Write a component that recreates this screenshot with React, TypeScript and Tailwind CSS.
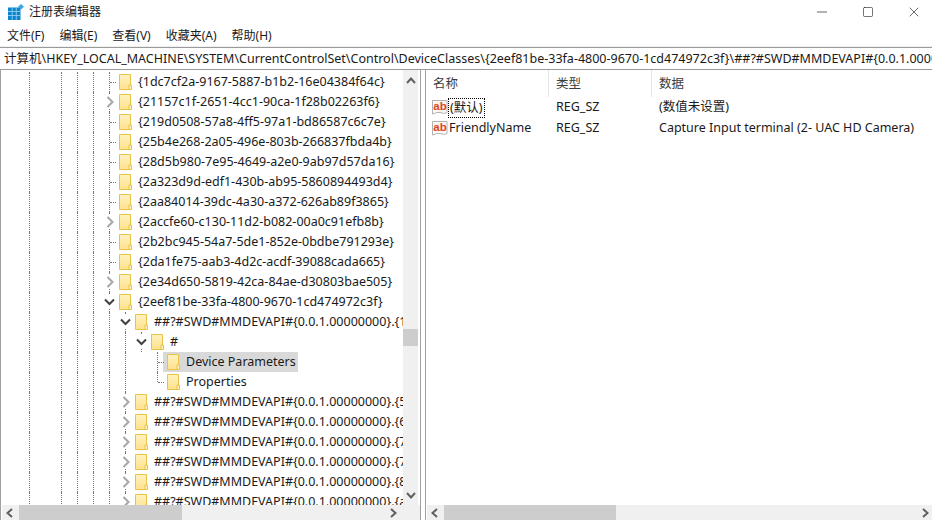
import React from "react";
import { Minus, Square, X } from "lucide-react";

const SANS = "font-['Noto_Sans','Noto_Sans_CJK_SC',sans-serif]";
const MM = "##?#SWD#MMDEVAPI#{0.0.1.00000000}.";

const FolderIcon = () => (
  <svg width="13" height="16" viewBox="0 0 13 16" className="block shrink-0">
    <defs>
      <linearGradient id="folderFill" x1="0" y1="0" x2="0" y2="1">
        <stop offset="0" stopColor="#fff2c0" />
        <stop offset="1" stopColor="#fde28a" />
      </linearGradient>
    </defs>
    <path d="M.5.5h11v15H.5z" fill="url(#folderFill)" stroke="#e8c34a" />
    <path d="M10 15.5V11h2.5v4.5z" fill="#fff2c0" stroke="#e8c34a" />
  </svg>
);

const RegIcon = () => (
  <svg width="16" height="18" viewBox="0 0 16 18" className="block shrink-0">
    <path d="M.5 1.5h14.5v12c-3 1.5-4 .5-7 0s-4 .5-7.5 1.5z" fill="#fff" stroke="#b0b0b0" />
    <rect x="2" y="2.5" width="12" height="10" fill="#fdf1ed" />
    <text x="8" y="11" textAnchor="middle" fontSize="11.5" fontWeight="700" fill="#d8481f" fontFamily="Liberation Sans, sans-serif">
      ab
    </text>
  </svg>
);

// scrollbar and tree arrows are drawn, lucide's chevrons come out too thin at this size
const Arrow = ({ dir, color = "#606060" }: { dir: "left" | "right" | "up" | "down"; color?: string }) => {
  const d = {
    left: "M6 1 1.5 5 6 9",
    right: "M2 1l4.5 4L2 9",
    up: "M1 6l4-4.5L9 6",
    down: "M1 2l4 4.5L9 2",
  }[dir];
  return (
    <svg width="10" height="10" viewBox="0 0 10 10" className="block shrink-0" style={{ overflow: "visible" }}>
      <path d={d} fill="none" stroke={color} strokeWidth="2" />
    </svg>
  );
};

// one indent column of the tree, the dotted guide runs down its left edge
const Guide = ({ w = 16, on = true }: { w?: number; on?: boolean }) => (
  <div className={`shrink-0 h-5 border-l border-dotted ${on ? "border-[#777]" : "border-transparent"}`} style={{ width: w }} />
);

type Exp = "none" | "closed" | "open" | "elbow" | "elbowEnd";

const Expander = ({ kind }: { kind: Exp }) => (
  <div className="relative w-[10px] h-5 shrink-0">
    {kind === "elbowEnd" ? (
      <div className="absolute left-0 top-0 h-[10px] border-l border-dotted border-[#777]" />
    ) : (
      <div className="absolute left-0 top-0 h-5 border-l border-dotted border-[#777]" />
    )}
    {(kind === "none" || kind === "elbow" || kind === "elbowEnd") && (
      <div className="absolute left-px top-[10px] w-[6px] border-t border-dotted border-[#777]" />
    )}
    {kind === "closed" && (
      <div className="absolute left-[-5px] top-[3px] w-[11px] h-[14px] bg-white flex items-center justify-center">
        <svg width="8" height="12" viewBox="0 0 8 12">
          <path d="M1.5 1l5 5-5 5" fill="none" stroke="#a6a6a6" strokeWidth="2" />
        </svg>
      </div>
    )}
    {kind === "open" && (
      <div className="absolute left-[-6px] top-[3px] w-[12px] h-[14px] bg-white flex items-center justify-center">
        <svg width="11" height="8" viewBox="0 0 11 8">
          <path d="M1 1.5l4.5 4.5L10 1.5" fill="none" stroke="#404040" strokeWidth="2" />
        </svg>
      </div>
    )}
  </div>
);

type Row = { depth: number; exp: Exp; text: string; selected?: boolean };

const rows: Row[] = [
  { depth: 0, exp: "none", text: "{1dc7cf2a-9167-5887-b1b2-16e04384f64c}" },
  { depth: 0, exp: "closed", text: "{21157c1f-2651-4cc1-90ca-1f28b02263f6}" },
  { depth: 0, exp: "none", text: "{219d0508-57a8-4ff5-97a1-bd86587c6c7e}" },
  { depth: 0, exp: "none", text: "{25b4e268-2a05-496e-803b-266837fbda4b}" },
  { depth: 0, exp: "none", text: "{28d5b980-7e95-4649-a2e0-9ab97d57da16}" },
  { depth: 0, exp: "none", text: "{2a323d9d-edf1-430b-ab95-5860894493d4}" },
  { depth: 0, exp: "none", text: "{2aa84014-39dc-4a30-a372-626ab89f3865}" },
  { depth: 0, exp: "closed", text: "{2accfe60-c130-11d2-b082-00a0c91efb8b}" },
  { depth: 0, exp: "none", text: "{2b2bc945-54a7-5de1-852e-0bdbe791293e}" },
  { depth: 0, exp: "none", text: "{2da1fe75-aab3-4d2c-acdf-39088cada665}" },
  { depth: 0, exp: "closed", text: "{2e34d650-5819-42ca-84ae-d30803bae505}" },
  { depth: 0, exp: "open", text: "{2eef81be-33fa-4800-9670-1cd474972c3f}" },
  { depth: 1, exp: "open", text: MM + "{1" },
  { depth: 2, exp: "open", text: "#" },
  { depth: 3, exp: "elbow", text: "Device Parameters", selected: true },
  { depth: 3, exp: "elbowEnd", text: "Properties" },
  { depth: 1, exp: "closed", text: MM + "{5" },
  { depth: 1, exp: "closed", text: MM + "{6" },
  { depth: 1, exp: "closed", text: MM + "{7" },
  { depth: 1, exp: "closed", text: MM + "{7" },
  { depth: 1, exp: "closed", text: MM + "{8" },
  { depth: 1, exp: "closed", text: MM + "{a" },
];

const TreeRow = ({ row }: { row: Row }) => (
  <div className="flex items-center h-5 pl-[29px] whitespace-nowrap">
    <Guide w={32} />
    <Guide />
    <Guide />
    <Guide />
    {row.depth >= 1 && <Guide />}
    {row.depth >= 2 && <Guide />}
    {row.depth >= 3 && <Guide on={false} />}
    <Expander kind={row.exp} />
    <div className={`flex items-center h-5 ${row.selected ? "bg-[#d9d9d9] pr-[2px] ml-[-4px] pl-[4px]" : ""}`}>
      <FolderIcon />
      <span className="ml-[6px] pt-px text-[12.5px] text-[#1a1a1a]">{row.text}</span>
    </div>
  </div>
);

const columns = [
  { title: "名称", w: "w-[123px]" },
  { title: "类型", w: "w-[103px]" },
  { title: "数据", w: "flex-1" },
];

const menus = ["文件(F)", "编辑(E)", "查看(V)", "收藏夹(A)", "帮助(H)"];

export default function App() {
  return (
    <div className={`${SANS} w-[932px] h-[520px] bg-white flex flex-col overflow-hidden text-[12.5px] text-[#1a1a1a]`}>
      {/* title bar */}
      <div className="h-[26px] flex items-center shrink-0 pb-[3px]">
        <svg width="16" height="16" viewBox="0 0 16 16" className="ml-2">
          <rect x="0" y="3.5" width="12.5" height="12.5" fill="#0a86cf" />
          <path d="M0 7.5h12.5M0 11.5h12.5M4.2 3.5V16M8.3 3.5V16" stroke="#9fd4f2" strokeWidth=".8" />
          <path d="M13 0l3 2.7L13 5.4l-3-2.7z" fill="#3aa6e4" />
        </svg>
        <span className="ml-[5px] text-[12px]">注册表编辑器</span>
        <div className="ml-auto -mr-[5px] flex items-center">
          <div className="w-[46px] flex justify-center"><Minus size={16} strokeWidth={1} /></div>
          <div className="w-[46px] flex justify-center"><Square size={12} strokeWidth={1.2} /></div>
          <div className="w-[46px] flex justify-center"><X size={16} strokeWidth={1} /></div>
        </div>
      </div>

      {/* menu */}
      <div className="h-[21px] flex items-center pl-[7px] gap-[15px] shrink-0 border-b border-[#f0f0f0]">
        {menus.map((m) => (
          <span key={m} className="text-[12px]">{m}</span>
        ))}
      </div>

      {/* address bar */}
      <div className="h-[23px] shrink-0 bg-white border-y border-[#9a9a9a] flex items-center pl-[4px] pt-px overflow-hidden whitespace-nowrap">
        计算机\HKEY_LOCAL_MACHINE\SYSTEM\CurrentControlSet\Control\DeviceClasses\{"{2eef81be-33fa-4800-9670-1cd474972c3f}"}\##?#SWD#MMDEVAPI#{"{0.0.1.00000000}.{1"}
      </div>

      {/* panes */}
      <div className="flex-1 flex min-h-0">
        <div className="w-[420px] shrink-0 flex flex-col border-l border-[#a0a0a0]">
          <div className="flex-1 flex min-h-0">
            <div className="flex-1 min-w-0 overflow-hidden pt-[2px] ml-[-1px]">
              {rows.map((r, i) => (
                <TreeRow key={i} row={r} />
              ))}
            </div>
            <div className="w-[15px] shrink-0 bg-[#f0f0f0] flex flex-col items-center">
              <div className="mt-[7px]"><Arrow dir="up" /></div>
              <div className="w-full h-[17px] bg-[#cdcdcd] mt-[242px]" />
              <div className="flex-1" />
              <div className="mb-[4px]"><Arrow dir="down" /></div>
            </div>
            <div className="w-[2px] shrink-0" />
          </div>
          <div className="flex h-[15px] bg-[#f0f0f0] items-center ml-px">
            <div className="w-[17px] flex justify-center"><Arrow dir="left" /></div>
            <div className="w-[163px] h-full bg-[#cdcdcd]" />
            <div className="flex-1" />
            <div className="mr-[21px]"><Arrow dir="right" /></div>
          </div>
        </div>

        {/* splitter */}
        <div className="w-[6px] shrink-0 border-x border-[#a0a0a0] bg-white" />

        <div className="flex-1 min-w-0 flex flex-col">
          <div className="flex-1 min-h-0">
            <div className="flex h-[27px] text-[#3c3c3c]">
              {columns.map((c) => (
                <div key={c.title} className={`${c.w} pl-[7px] pt-[2px] flex items-center border-r border-[#e5e5e5] last:border-r-0 text-[12.5px]`}>
                  {c.title}
                </div>
              ))}
            </div>
            <div className="flex items-center h-[21px] pl-[6px]">
              <RegIcon />
              <span className="w-[108px]">
                <span className="px-[1px] border border-dotted border-black inline-block leading-[18px]">(默认)</span>
              </span>
              <span className="w-[103px]">REG_SZ</span>
              <span>(数值未设置)</span>
            </div>
            <div className="flex items-center h-[21px] pl-[6px]">
              <RegIcon />
              <span className="w-[108px] pl-[1px]">FriendlyName</span>
              <span className="w-[103px]">REG_SZ</span>
              <span>Capture Input terminal (2- UAC HD Camera)</span>
            </div>
          </div>
          <div className="h-[15px] bg-[#f0f0f0] flex items-center ml-px">
            <div className="w-[17px] flex justify-center"><Arrow dir="left" /></div>
            <div className="w-[172px] h-full bg-[#cdcdcd]" />
            <div className="flex-1" />
            <div className="mr-[1px]"><Arrow dir="right" /></div>
          </div>
        </div>
      </div>
    </div>
  );
}
